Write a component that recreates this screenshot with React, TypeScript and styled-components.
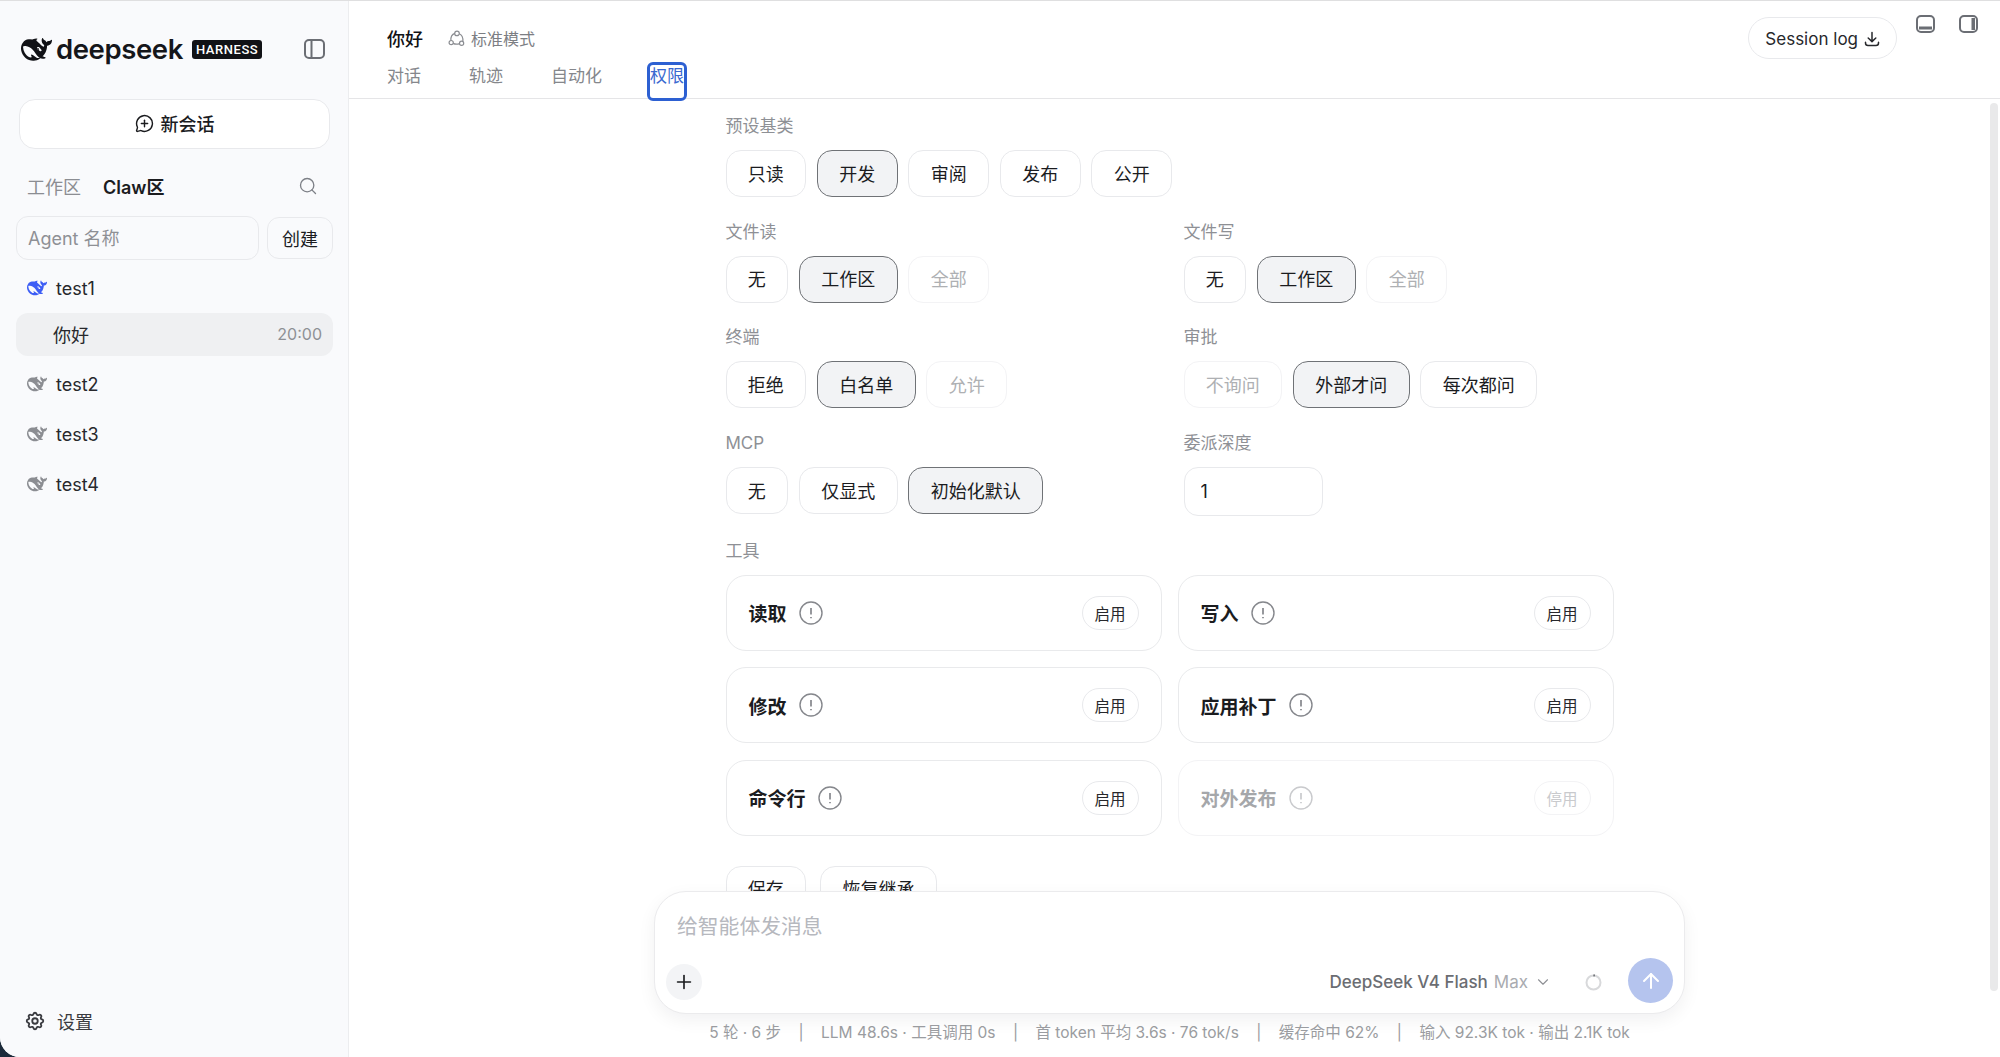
import * as React from 'react';
import styled, { createGlobalStyle } from 'styled-components';
import { MessageCirclePlus, Search, Plus, ChevronDown, ArrowUp } from 'lucide-react';
import { TbSettings } from 'react-icons/tb';

const GlobalStyle = createGlobalStyle`
  html, body { margin: 0; height: 100%; background: #1b2a3a; }
  * { box-sizing: border-box; }
  body { font-family: Inter, "Noto Sans CJK SC", sans-serif; color: #1b1c1f; overflow: hidden; }
`;

const WHALE =
  'M23.748 4.482c-.254-.124-.364.113-.512.234-.051.039-.094.09-.137.136-.372.397-.806.657-1.373.626-.829-.046-1.537.214-2.163.848-.133-.782-.575-1.248-1.247-1.548-.352-.156-.708-.311-.955-.65-.172-.241-.219-.51-.305-.774-.055-.16-.11-.323-.293-.35-.2-.031-.278.136-.356.276-.313.572-.434 1.202-.422 1.84.027 1.436.633 2.58 1.838 3.393.137.093.172.187.129.323-.082.28-.18.552-.266.833-.055.179-.137.217-.329.14a5.526 5.526 0 01-1.736-1.18c-.857-.828-1.631-1.742-2.597-2.458a11.365 11.365 0 00-.689-.471c-.985-.957.13-1.743.388-1.836.27-.098.093-.432-.779-.428-.872.004-1.67.295-2.687.684a3.055 3.055 0 01-.465.137 9.597 9.597 0 00-2.883-.102c-1.885.21-3.39 1.102-4.497 2.623C.082 8.606-.231 10.684.152 12.85c.403 2.284 1.569 4.175 3.36 5.653 1.858 1.533 3.997 2.284 6.438 2.14 1.482-.085 3.133-.284 4.994-1.86.47.234.962.327 1.78.397.63.059 1.236-.03 1.705-.128.735-.156.684-.837.419-.961-2.155-1.004-1.682-.595-2.113-.926 1.096-1.296 2.746-2.642 3.392-7.003.05-.347.007-.565 0-.845-.004-.17.035-.237.23-.256a4.173 4.173 0 001.545-.475c1.396-.763 1.96-2.015 2.093-3.517.02-.23-.004-.467-.247-.588zM11.581 18c-2.089-1.642-3.102-2.183-3.52-2.16-.392.024-.321.471-.235.763.09.288.207.486.371.739.114.167.192.416-.113.603-.673.416-1.842-.14-1.897-.167-1.361-.802-2.5-1.86-3.301-3.307-.774-1.393-1.224-2.887-1.298-4.482-.02-.386.093-.522.477-.592a4.696 4.696 0 011.529-.039c2.132.312 3.946 1.265 5.468 2.774.868.86 1.525 1.887 2.202 2.891.72 1.066 1.494 2.082 2.48 2.914.348.292.625.514.891.677-.802.09-2.14.11-3.054-.614zm1-6.44a.306.306 0 01.415-.287.302.302 0 01.2.288.306.306 0 01-.31.307.303.303 0 01-.304-.308zm3.11 1.596c-.2.081-.399.151-.59.16a1.245 1.245 0 01-.798-.254c-.274-.23-.47-.358-.552-.758a1.73 1.73 0 01.016-.588c.07-.327-.008-.537-.239-.727-.187-.156-.426-.199-.688-.199a.559.559 0 01-.254-.078c-.11-.054-.2-.19-.114-.358.028-.054.16-.186.192-.21.356-.202.767-.136 1.146.016.352.144.618.408 1.001.782.391.451.462.576.685.914.176.265.336.537.445.848.067.195-.019.354-.25.452z';

const Shell = styled.div`
  display: flex;
  height: 1057px;
  background: #fff;
  border-top: 1px solid #dfdfe0;
  border-bottom-left-radius: 20px;
  overflow: hidden;
`;

const Sidebar = styled.aside`
  flex: 0 0 349px;
  width: 349px;
  min-width: 0;
  display: flex;
  flex-direction: column;
  background: #f9fafc;
  border-right: 1px solid #ecedef;
`;

const Brand = styled.div`
  display: flex;
  align-items: center;
  height: 34px;
  margin-top: 31px;
  padding: 0 23px 0 21px;
`;

const Wordmark = styled.span`
  margin-left: 4px;
  font-size: 27.5px;
  font-weight: 600;
  letter-spacing: -0.4px;
  line-height: 34px;
  color: #15161a;
`;

const Badge = styled.span`
  margin-left: 9px;
  height: 19px;
  padding: 0 4px;
  border-radius: 3px;
  background: #111216;
  color: #fff;
  font-family: Roboto, sans-serif;
  font-size: 13px;
  font-weight: 500;
  letter-spacing: 0.55px;
  line-height: 19px;
`;

const ToggleButton = styled.span`
  display: flex;
  margin-left: auto;
`;

const NewChat = styled.button`
  display: flex;
  align-items: center;
  justify-content: center;
  gap: 7px;
  width: 311px;
  height: 50px;
  margin: 33px 0 0 19px;
  padding: 0 0 2px;
  border: 1.5px solid #e8e9ec;
  border-radius: 16px;
  background: #fff;
  color: #1b1c1f;
  font: 500 18px Inter, "Noto Sans CJK SC", sans-serif;
`;

const ScopeTabs = styled.div`
  display: flex;
  align-items: center;
  gap: 22px;
  height: 24px;
  margin-top: 25px;
  padding: 0 30px 0 27px;
`;

const ScopeTab = styled.span<{ $active?: boolean }>`
  font-size: 18px;
  font-weight: ${(p) => (p.$active ? 600 : 400)};
  color: ${(p) => (p.$active ? '#1b1c1f' : '#8b8d92')};
`;

const SearchSlot = styled.span`
  display: flex;
  margin-left: auto;
  color: #7d8087;
`;

const CreateRow = styled.div`
  display: flex;
  align-items: center;
  gap: 8px;
  margin: 18px 15px 0 16px;
`;

const AgentInput = styled.input`
  flex: 1;
  width: 243px;
  min-width: 0;
  height: 44px;
  padding: 0 11px;
  border: 1.5px solid #e8e9ec;
  border-radius: 12px;
  background: transparent;
  font: 400 18px Inter, "Noto Sans CJK SC", sans-serif;
  outline: none;
  &::placeholder { color: #8e9095; opacity: 1; }
`;

const CreateButton = styled.button`
  flex: 0 0 66px;
  height: 42px;
  padding: 0;
  border: 1.5px solid #e8e9ec;
  border-radius: 12px;
  background: transparent;
  color: #1b1c1f;
  font: 400 18px Inter, "Noto Sans CJK SC", sans-serif;
`;

const AgentList = styled.div`
  display: flex;
  flex-direction: column;
  margin-top: 3px;
`;

const AgentRow = styled.div`
  display: flex;
  align-items: center;
  gap: 9px;
  height: 50px;
  padding-left: 27px;
  font-size: 18px;
  color: #27282c;
`;

const SessionRow = styled.div`
  display: flex;
  align-items: center;
  justify-content: space-between;
  height: 43px;
  margin: 0 15px 3px 16px;
  padding: 0 11px 1px 37px;
  border-radius: 12px;
  background: #eff0f2;
  font-size: 18px;
  color: #27282c;
`;

const SessionTime = styled.span`
  font-size: 16px;
  color: #8e9095;
`;

const SidebarFooter = styled.div`
  display: flex;
  align-items: center;
  gap: 11px;
  margin-top: auto;
  padding: 0 0 23px 24px;
  font-size: 18px;
  color: #3a3b40;
`;

const Main = styled.main`
  position: relative;
  flex: 1;
  min-width: 0;
  display: flex;
  flex-direction: column;
`;

const Header = styled.header`
  display: flex;
  justify-content: space-between;
  flex: 0 0 98px;
  padding: 0 22px 0 38px;
  border-bottom: 1.5px solid #e5e5e7;
`;

const TitleRow = styled.div`
  display: flex;
  align-items: center;
  height: 28px;
  margin-top: 23px;
`;

const Title = styled.span`
  font-size: 18px;
  font-weight: 500;
  color: #111216;
`;

const Mode = styled.span`
  display: flex;
  align-items: center;
  gap: 6px;
  margin-left: 25px;
  font-size: 16px;
  color: #7c7e83;
`;

const NavTabs = styled.nav`
  display: flex;
  gap: 48px;
  margin-top: 13px;
`;

const NavTab = styled.span<{ $active?: boolean }>`
  height: 33px;
  font-size: 17px;
  line-height: 22px;
  color: ${(p) => (p.$active ? '#3a69d0' : '#85878c')};
  ${(p) => p.$active && 'outline: 3px solid #2d60d2; border-radius: 3px;'}
`;

const HeaderActions = styled.div`
  display: flex;
  align-items: flex-start;
  padding-top: 14px;
`;

const LogButton = styled.button`
  display: flex;
  align-items: center;
  gap: 6px;
  height: 42px;
  margin: 2px 19px 0 0;
  padding: 1px 16px 0;
  border: 1.5px solid #e8e9ec;
  border-radius: 21px;
  background: #fff;
  color: #27282c;
  font: 400 17px Inter, "Noto Sans CJK SC", sans-serif;
`;

const WindowIcon = styled.span`
  display: flex;
  &:last-child { margin-left: 24px; }
`;

const Scroller = styled.div`
  flex: 1;
  min-height: 0;
  overflow: hidden;
  padding: 16px 10px 0 0;
`;

const ScrollThumb = styled.div`
  position: absolute;
  top: 102px;
  right: 2px;
  width: 8px;
  height: 888px;
  border-radius: 4px;
  background: #e9e9ea;
`;

const Form = styled.div`
  display: grid;
  grid-template-columns: 458px 430px;
  row-gap: 23.7px;
  width: 888px;
  margin: 0 auto;
`;

const Group = styled.div<{ $wide?: boolean }>`
  ${(p) => p.$wide && 'grid-column: 1 / -1;'}
`;

const Label = styled.div`
  height: 22px;
  margin-bottom: 13px;
  font-size: 17px;
  line-height: 22px;
  color: #8e9095;
`;

const Options = styled.div`
  display: flex;
  gap: 10.8px;
`;

const Option = styled.button<{ $selected?: boolean; $off?: boolean }>`
  height: 47px;
  padding: 0 21.35px 2px;
  border: 1.5px solid ${(p) => (p.$selected ? '#6f7276' : p.$off ? '#f3f3f5' : '#e8e9ec')};
  border-radius: 15px;
  background: ${(p) => (p.$selected ? '#f2f3f5' : '#fff')};
  color: ${(p) => (p.$off ? '#aeb0b3' : '#1b1c1f')};
  font: 400 18px Inter, "Noto Sans CJK SC", sans-serif;
  white-space: nowrap;
`;

const DepthInput = styled.input`
  display: block;
  width: 139px;
  height: 49px;
  padding: 0 16px;
  border: 1.5px solid #e8e9ec;
  border-radius: 14px;
  color: #1b1c1f;
  font: 400 18px Inter, "Noto Sans CJK SC", sans-serif;
  outline: none;
`;

const ToolGrid = styled.div`
  display: grid;
  grid-template-columns: 436px 436px;
  gap: 16.5px 16px;
`;

const ToolCard = styled.div<{ $off?: boolean }>`
  display: flex;
  align-items: center;
  gap: 12px;
  height: 76px;
  padding: 0 22px;
  border: 1.5px solid ${(p) => (p.$off ? '#f3f3f5' : '#e9eaec')};
  border-radius: 20px;
  color: ${(p) => (p.$off ? '#a5a7aa' : '#1b1c1f')};
`;

const ToolName = styled.span`
  font-size: 19px;
  font-weight: 600;
`;

const ToolPill = styled.span<{ $off?: boolean }>`
  display: flex;
  align-items: center;
  justify-content: center;
  width: 57px;
  height: 34px;
  margin-left: auto;
  border: 1.5px solid ${(p) => (p.$off ? '#f3f3f5' : '#e8e9ec')};
  border-radius: 17px;
  font-size: 15.5px;
  font-weight: 400;
  color: ${(p) => (p.$off ? '#c9cacd' : '#27282c')};
`;

const SaveRow = styled(Options)`
  gap: 14px;
  margin-top: 30px;
`;

const Composer = styled.div`
  flex: 0 0 123px;
  display: flex;
  flex-direction: column;
  width: 1031px;
  margin-left: 305px;
  padding: 19px 11px 0;
  border: 1.5px solid #ebebed;
  border-radius: 32px;
  background: #fff;
  box-shadow: 0 6px 18px rgba(20, 24, 40, 0.06);
`;

const ComposerInput = styled.input`
  height: 30px;
  padding: 0 11px;
  border: 0;
  background: transparent;
  font: 400 20.8px Inter, "Noto Sans CJK SC", sans-serif;
  outline: none;
  &::placeholder { color: #b6b8be; opacity: 1; }
`;

const ComposerBar = styled.div`
  display: flex;
  align-items: center;
  height: 45px;
  margin-top: 17px;
`;

const AddButton = styled.button`
  display: flex;
  align-items: center;
  justify-content: center;
  width: 36px;
  height: 36px;
  margin-top: 3px;
  padding: 0;
  border: 0;
  border-radius: 50%;
  background: #f3f4f6;
  color: #1b1c1f;
`;

const ModelPicker = styled.span`
  display: flex;
  align-items: center;
  gap: 6px;
  margin: 3px 0 0 auto;
  font-size: 17px;
  font-weight: 500;
  color: #6b6d72;
`;

const ModelTier = styled.span`
  font-weight: 400;
  color: #a9abb0;
`;

const Ring = styled.svg`
  margin: 3px 26px 0 33px;
`;

const SendButton = styled.button`
  display: flex;
  align-items: center;
  justify-content: center;
  width: 45px;
  height: 45px;
  padding: 0;
  border: 0;
  border-radius: 50%;
  background: #b5c4ee;
  color: #fff;
`;

const Stats = styled.div`
  display: flex;
  justify-content: center;
  gap: 17.4px;
  flex: 0 0 43px;
  padding: 9px 10px 0 0;
  font-size: 15.5px;
  line-height: 20px;
  color: #9a9ca0;
`;

const Whale = ({ size, color }: { size: number; color: string }) => (
  <svg width={size} height={size} viewBox="0 0 24 24" fill={color}>
    <path d={WHALE} />
  </svg>
);

const PanelIcon = ({ side }: { side: 'left' | 'bottom' | 'right' }) => {
  const large = side === 'left';
  const w = large ? 21 : 19;
  const h = large ? 20 : 18;
  return (
    <svg width={w} height={h} viewBox={`0 0 ${w} ${h}`} fill="none" stroke="#6b6e74" strokeWidth="2">
      <rect x="1" y="1" width={w - 2} height={h - 2} rx="4" />
      {side === 'left' && <path d="M7.5 1v18" />}
      {side === 'bottom' && <rect x="3" y="11.5" width="13" height="3" fill="#6b6e74" stroke="none" />}
      {side === 'right' && <rect x="12.5" y="3" width="3.5" height="12" fill="#6b6e74" stroke="none" />}
    </svg>
  );
};

const ModeIcon = () => (
  <svg width="17" height="17" viewBox="0 0 17 17" fill="none" stroke="#8b8d92" strokeWidth="1.2">
    <circle cx="9" cy="3.4" r="2.3" />
    <circle cx="3.2" cy="12.6" r="2.1" />
    <circle cx="13.6" cy="13.2" r="2.1" />
    <path d="M6.9 3.4C4 4.4 2.6 7 2.9 10.5M11.2 3.8c2.6 1.2 4 3.6 3.7 7.6M5.2 13.4c1.9 1 4.3 1 6.4.2" />
  </svg>
);

const DownloadIcon = () => (
  <svg width="16" height="16" viewBox="0 0 16 16" fill="none" stroke="#27282c" strokeWidth="1.5" strokeLinecap="round" strokeLinejoin="round">
    <path d="M8 1.5v9M4.2 7l3.8 3.6L11.8 7M1.5 11.2v.8a2.5 2.5 0 0 0 2.5 2.5h8a2.5 2.5 0 0 0 2.5-2.5v-.8" />
  </svg>
);

const InfoIcon = ({ off }: { off?: boolean }) => (
  <svg width="24" height="24" viewBox="0 0 24 24" fill="none" stroke={off ? '#c9cacd' : '#85878c'} strokeWidth="1.4">
    <circle cx="12" cy="12" r="11" />
    <path d="M12 7v6.5M12 16v1.2" strokeWidth="1.7" />
  </svg>
);

const presets = ['只读', '开发', '审阅', '发布', '公开'];

type Opt = [string, boolean?, boolean?];

const groups: { label: string; options: Opt[] }[] = [
  { label: '文件读', options: [['无'], ['工作区', true], ['全部', false, true]] },
  { label: '文件写', options: [['无'], ['工作区', true], ['全部', false, true]] },
  { label: '终端', options: [['拒绝'], ['白名单', true], ['允许', false, true]] },
  { label: '审批', options: [['不询问', false, true], ['外部才问', true], ['每次都问']] },
  { label: 'MCP', options: [['无'], ['仅显式'], ['初始化默认', true]] },
];

const tools = ['读取', '写入', '修改', '应用补丁', '命令行'];

const OptionRow = ({ options }: { options: Opt[] }) => (
  <Options>
    {options.map(([text, selected, off]) => (
      <Option key={text} $selected={selected} $off={off}>
        {text}
      </Option>
    ))}
  </Options>
);

const App: React.FC = () => {
  return (
    <Shell>
      <GlobalStyle />
      <Sidebar>
        <Brand>
          <Whale size={31} color="#111216" />
          <Wordmark>deepseek</Wordmark>
          <Badge>HARNESS</Badge>
          <ToggleButton>
            <PanelIcon side="left" />
          </ToggleButton>
        </Brand>
        <NewChat>
          <MessageCirclePlus size={19} strokeWidth={1.8} />
          新会话
        </NewChat>
        <ScopeTabs>
          <ScopeTab>工作区</ScopeTab>
          <ScopeTab $active>Claw区</ScopeTab>
          <SearchSlot>
            <Search size={20} strokeWidth={1.6} />
          </SearchSlot>
        </ScopeTabs>
        <CreateRow>
          <AgentInput placeholder="Agent 名称" />
          <CreateButton>创建</CreateButton>
        </CreateRow>
        <AgentList>
          <AgentRow>
            <Whale size={20} color="#3d5ef5" />
            test1
          </AgentRow>
          <SessionRow>
            你好
            <SessionTime>20:00</SessionTime>
          </SessionRow>
          {['test2', 'test3', 'test4'].map((name) => (
            <AgentRow key={name}>
              <Whale size={20} color="#8b8d92" />
              {name}
            </AgentRow>
          ))}
        </AgentList>
        <SidebarFooter>
          <TbSettings size={22} />
          设置
        </SidebarFooter>
      </Sidebar>
      <Main>
        <Header>
          <div>
            <TitleRow>
              <Title>你好</Title>
              <Mode>
                <ModeIcon />
                标准模式
              </Mode>
            </TitleRow>
            <NavTabs>
              <NavTab>对话</NavTab>
              <NavTab>轨迹</NavTab>
              <NavTab>自动化</NavTab>
              <NavTab $active>权限</NavTab>
            </NavTabs>
          </div>
          <HeaderActions>
            <LogButton>
              Session log
              <DownloadIcon />
            </LogButton>
            <WindowIcon>
              <PanelIcon side="bottom" />
            </WindowIcon>
            <WindowIcon>
              <PanelIcon side="right" />
            </WindowIcon>
          </HeaderActions>
        </Header>
        <Scroller>
          <Form>
            <Group $wide>
              <Label>预设基类</Label>
              <Options>
                {presets.map((p) => (
                  <Option key={p} $selected={p === '开发'}>
                    {p}
                  </Option>
                ))}
              </Options>
            </Group>
            {groups.map((g) => (
              <Group key={g.label}>
                <Label>{g.label}</Label>
                <OptionRow options={g.options} />
              </Group>
            ))}
            <Group>
              <Label>委派深度</Label>
              <DepthInput defaultValue="1" />
            </Group>
            <Group $wide>
              <Label>工具</Label>
              <ToolGrid>
                {tools.map((t) => (
                  <ToolCard key={t}>
                    <ToolName>{t}</ToolName>
                    <InfoIcon />
                    <ToolPill>启用</ToolPill>
                  </ToolCard>
                ))}
                <ToolCard $off>
                  <ToolName>对外发布</ToolName>
                  <InfoIcon off />
                  <ToolPill $off>停用</ToolPill>
                </ToolCard>
              </ToolGrid>
              <SaveRow>
                <Option>保存</Option>
                <Option>恢复继承</Option>
              </SaveRow>
            </Group>
          </Form>
        </Scroller>
        <ScrollThumb />
        <Composer>
          <ComposerInput placeholder="给智能体发消息" />
          <ComposerBar>
            <AddButton>
              <Plus size={22} strokeWidth={1.8} />
            </AddButton>
            <ModelPicker>
              DeepSeek V4 Flash <ModelTier>Max</ModelTier>
              <ChevronDown size={18} strokeWidth={1.5} color="#8e9095" />
            </ModelPicker>
            <Ring width="17" height="17" viewBox="0 0 17 17" fill="none">
              <circle cx="8.5" cy="8.5" r="7" stroke="#d8d9db" strokeWidth="2" />
              <path d="M8.5 1.5a7 7 0 0 1 1.2.1" stroke="#4a4c52" strokeWidth="2" />
            </Ring>
            <SendButton>
              <ArrowUp size={24} strokeWidth={2} />
            </SendButton>
          </ComposerBar>
        </Composer>
        <Stats>
          <span>5 轮 · 6 步</span>
          <span>|</span>
          <span>LLM 48.6s · 工具调用 0s</span>
          <span>|</span>
          <span>首 token 平均 3.6s · 76 tok/s</span>
          <span>|</span>
          <span>缓存命中 62%</span>
          <span>|</span>
          <span>输入 92.3K tok · 输出 2.1K tok</span>
        </Stats>
      </Main>
    </Shell>
  );
};

export default App;
